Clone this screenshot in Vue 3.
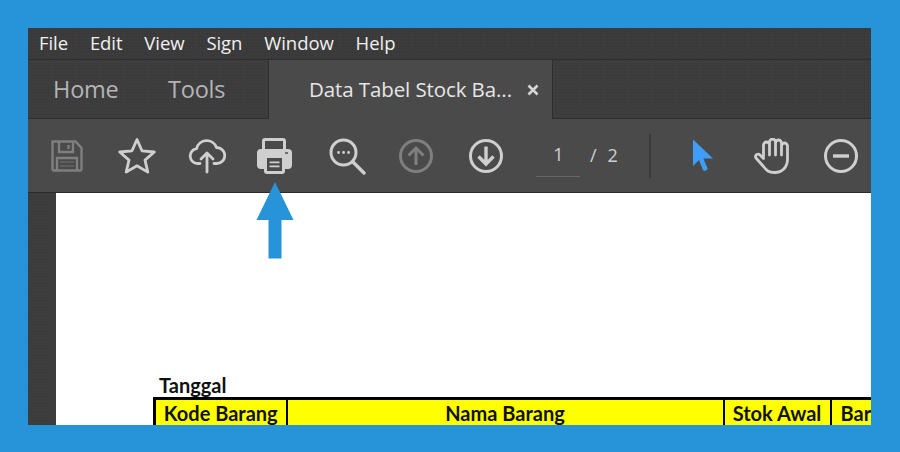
<script setup>
const menus = ['File', 'Edit', 'View', 'Sign', 'Window', 'Help']
</script>

<template>
  <div class="frame">
    <div class="window">
      <nav class="menubar">
        <span v-for="m in menus" :key="m" class="menu">{{ m }}</span>
      </nav>

      <div class="tabbar">
        <div class="navtabs">
          <span class="navtab home">Home</span>
          <span class="navtab tools">Tools</span>
        </div>
        <div class="doctab">
          <span class="doctitle">Data Tabel Stock Ba...</span>
          <svg class="close" width="12" height="12" viewBox="0 0 12 12">
            <path d="M1.500 1.500l9 9M10.500 1.500l-9 9" stroke="#d6d6d6" stroke-width="2.600" fill="none" />
          </svg>
        </div>
        <div class="tabrest"></div>
      </div>

      <div class="toolbar">
        <span class="tool">
          <svg width="36" height="36" viewBox="0 0 36 36" fill="none" stroke="#7f7f7f" stroke-width="2.400">
            <path d="M3.500 3.500h23l6 6.500v21a1.500 1.500 0 0 1-1.500 1.500h-26a1.500 1.500 0 0 1-1.500-1.500z" />
            <path d="M10 4v10h14V4M19.500 7v4" />
            <path d="M8 32V20h20v12" />
            <path d="M11 24h14M11 28h14" stroke="#656565" stroke-width="1.500" />
          </svg>
        </span>
        <span class="tool">
          <svg width="40" height="40" viewBox="0 0 40 40" fill="none" stroke="#cfcfcf" stroke-width="2.800" stroke-linejoin="round">
            <path d="M20 3.500l5 11.300 12.300 1.200-9.300 8.100 2.800 12-10.800-6.300-10.800 6.300 2.800-12-9.300-8.100 12.300-1.200z" />
          </svg>
        </span>
        <span class="tool">
          <svg width="38" height="38" viewBox="0 0 38 38" fill="none" stroke="#cfcfcf" stroke-width="2.800" stroke-linecap="round" stroke-linejoin="round">
            <path d="M12 26.500H9.500a7.500 7.500 0 0 1-1-14.900A10.500 10.500 0 0 1 28.500 10.500a8 8 0 0 1 .500 16H26" />
            <path d="M19 35V16.500M13 22l6-6 6 6" />
          </svg>
        </span>
        <span class="tool print">
          <svg width="36" height="36" viewBox="0 0 36 36">
            <path fill="#cfcfcf" d="M5 3a3 3 0 0 1 3-3h18a3 3 0 0 1 3 3v9H5z" />
            <path fill="#4a4a4a" d="M8 3h18v8H8z" />
            <path fill="#cfcfcf" d="M4 11h27a4 4 0 0 1 4 4v12a4 4 0 0 1-4 4h-3v2a3 3 0 0 1-3 3H10a3 3 0 0 1-3-3v-2H4a4 4 0 0 1-4-4V15a4 4 0 0 1 4-4z" />
            <path fill="#4a4a4a" d="M10 20h15v13H10z" />
            <path fill="#cfcfcf" d="M12.500 23.500h10v1.700h-10zM12.500 27.500h10v1.700h-10z" />
            <path fill="#6e6e6e" d="M28 14h3v2h-3z" />
          </svg>
        </span>
        <span class="tool">
          <svg width="38" height="38" viewBox="0 0 38 38" fill="none" stroke="#cfcfcf" stroke-width="3" stroke-linecap="round">
            <circle cx="15.500" cy="15.500" r="12.500" />
            <path d="M25 25l11 11" stroke-width="3.400" />
            <path d="M10.500 15.500h.1M15.500 15.500h.1M20.500 15.500h.1" stroke-width="2.800" />
          </svg>
        </span>
        <span class="tool">
          <svg width="36" height="36" viewBox="0 0 36 36" fill="none" stroke="#7f7f7f" stroke-width="3">
            <circle cx="18" cy="18" r="15.500" />
            <path d="M18 27V10M10.500 17.500L18 10l7.500 7.500" />
          </svg>
        </span>
        <span class="tool">
          <svg width="36" height="36" viewBox="0 0 36 36" fill="none" stroke="#cfcfcf" stroke-width="3">
            <circle cx="18" cy="18" r="15.500" />
            <path d="M18 8.500V25M10.500 18.500L18 26l7.500-7.500" stroke-width="3.400" />
          </svg>
        </span>

        <div class="pager">
          <span class="pagenum">1</span>
          <span class="pagesep">/</span>
          <span class="pagetotal">2</span>
        </div>
        <span class="divider"></span>

        <span class="tool cursor">
          <svg width="24" height="36" viewBox="0 0 24 36">
            <path fill="#3f9efb" d="M2 1.500V28l6-6 3.800 9.500c.6 1.300 1.500 1.600 2.700 1.100l.9-.4c1.100-.5 1.300-1.400.9-2.500L12.300 20.500H22z" />
          </svg>
        </span>
        <span class="tool hand">
          <svg width="36" height="36" viewBox="0 0 36 36" fill="none" stroke="#cfcfcf" stroke-width="2.800" stroke-linecap="round" stroke-linejoin="round">
            <path d="M9.500 19V7a3 3 0 0 1 6 0V17M15.500 7V4a3 3 0 0 1 6 0V17M21.500 5a3 3 0 0 1 6 0V17M27.500 8a3 3 0 0 1 6 0V21c0 8-5 13.500-13 13.500-6 0-8-2-11-6L2 20c-1.800-2.800 2-5 4-3l3.500 3.500" />
          </svg>
        </span>
        <span class="tool minus">
          <svg width="36" height="36" viewBox="0 0 36 36" fill="none" stroke="#cfcfcf" stroke-width="3">
            <circle cx="18" cy="18" r="15.500" />
            <path d="M10 18h16" stroke-width="3.400" />
          </svg>
        </span>
      </div>

      <div class="viewer">
        <div class="rail"></div>
        <div class="page">
          <div class="caption">Tanggal</div>
          <table class="sheet">
            <colgroup>
              <col class="c1" />
              <col class="c2" />
              <col class="c3" />
              <col class="c4" />
            </colgroup>
            <thead>
              <tr>
                <th>Kode Barang</th>
                <th>Nama Barang</th>
                <th>Stok Awal</th>
                <th class="last">Bar</th>
              </tr>
            </thead>
          </table>
        </div>
      </div>
    </div>

    <svg class="arrow" width="38" height="77" viewBox="0 0 38 77">
      <path fill="#2793d8" d="M19 0l18.500 38H25.500v38.500h-13V38H.5z" />
    </svg>
  </div>
</template>

<style>
html, body { margin: 0; padding: 0; background: #2793d8; }
</style>

<style scoped>
.frame {
  position: relative;
  width: 900px;
  height: 452px;
  box-sizing: border-box;
  padding: 28px 29px 27px 28px;
  background: #2793d8;
  overflow: hidden;
  font-family: "Open Sans", "Noto Sans", sans-serif;
}
.window {
  height: 397px;
  display: flex;
  flex-direction: column;
  overflow: hidden;
  background: #4a4a4a;
}
.menubar {
  flex: 0 0 32px;
  box-sizing: border-box;
  display: flex;
  align-items: center;
  gap: 21.800px;
  padding: 0 0 3px 11px;
  background: radial-gradient(circle, #414141 .7px, #3a3a3a .9px) 0 0 / 3px 3px;
  border-bottom: 1px solid #2e2e2e;
}
.menu {
  font-size: 18.500px;
  color: #f0f0f0;
  letter-spacing: -.05px;
}
.tabbar {
  flex: 0 0 58px;
  display: flex;
  background: radial-gradient(circle, #434343 .7px, #3c3c3c .9px) 0 0 / 3px 3px;
}
.navtabs {
  flex: 0 0 240px;
  box-sizing: border-box;
  display: flex;
  padding-left: 25px;
  border-bottom: 1px solid #2e2e2e;
}
.navtab {
  font-size: 23.500px;
  color: #b4b4b4;
  line-height: 58px;
  letter-spacing: -.2px;
}
.home { width: 115px; }
.tools { width: 100px; }
.doctab {
  width: 285px;
  box-sizing: border-box;
  padding-left: 40px;
  display: flex;
  align-items: center;
  gap: 15px;
  background: #4a4a4a;
  border-left: 1px solid #2e2e2e;
  border-right: 1px solid #2e2e2e;
}
.doctitle {
  font-size: 20.500px;
  color: #e6e6e6;
  white-space: nowrap;
  letter-spacing: -.1px;
  padding-bottom: 2px;
}
.close { flex: none; }
.tabrest {
  flex: 1;
  border-bottom: 1px solid #2e2e2e;
}
.toolbar {
  flex: 0 0 74px;
  box-sizing: border-box;
  display: flex;
  align-items: center;
  padding: 0 0 0 19px;
  background: #4a4a4a;
  border-bottom: 1px solid #2a2a2a;
}
.tool {
  flex: none;
  width: 40px;
  display: flex;
  justify-content: center;
  margin-right: 30px;
}
.tool svg { display: block; flex: none; }
.tool:nth-child(3) { margin-right: 28px; }
.print { margin-right: 32px; }
.tool:nth-child(5) { margin-right: 29px; }
.pager {
  flex: none;
  width: 113px;
  display: flex;
  align-items: center;
  color: #cfcfcf;
  font-size: 18px;
}
.pagenum {
  width: 44px;
  box-sizing: border-box;
  text-align: center;
  padding: 0 0 10px 1px;
  border-bottom: 1px solid #666;
  margin-top: 8px;
}
.pagesep { margin-left: 10px; padding-bottom: 2px; }
.pagetotal { margin-left: 11px; padding-bottom: 2px; }
.divider {
  flex: none;
  width: 2px;
  height: 44px;
  margin-right: 32px;
  background: #3a3a3a;
}
.cursor { margin-right: 29px; }
.hand { margin-right: 29px; }
.viewer {
  flex: 1;
  min-height: 0;
  display: flex;
}
.rail {
  flex: 0 0 28px;
  background: radial-gradient(circle, #424242 .7px, #3c3c3c .9px) 0 0 / 3px 3px;
}
.page {
  flex: 1;
  min-width: 0;
  background: #fff;
  padding: 180px 0 0 97px;
  overflow: hidden;
  font-family: Lato, "Open Sans", sans-serif;
  color: #111;
}
.caption {
  font-size: 20px;
  font-weight: 700;
  line-height: 24px;
  padding-left: 6px;
}
.sheet {
  table-layout: fixed;
  width: 718px;
  border-collapse: collapse;
  background: #ff0;
  border-top: 3px solid #000;
  border-left: 3px solid #000;
}
.c1 { width: 132px; }
.c2 { width: 437px; }
.c3 { width: 107px; }
.c4 { width: 42px; }
th {
  height: 25px;
  padding: 1px 0 0;
  font-size: 20px;
  font-weight: 700;
  line-height: 25px;
  text-align: center;
  white-space: nowrap;
  border-right: 2px solid #000;
}
th.last { text-align: left; padding-left: 9px; border-right: 0; }
.arrow {
  position: absolute;
  left: 256px;
  top: 182px;
}
</style>
